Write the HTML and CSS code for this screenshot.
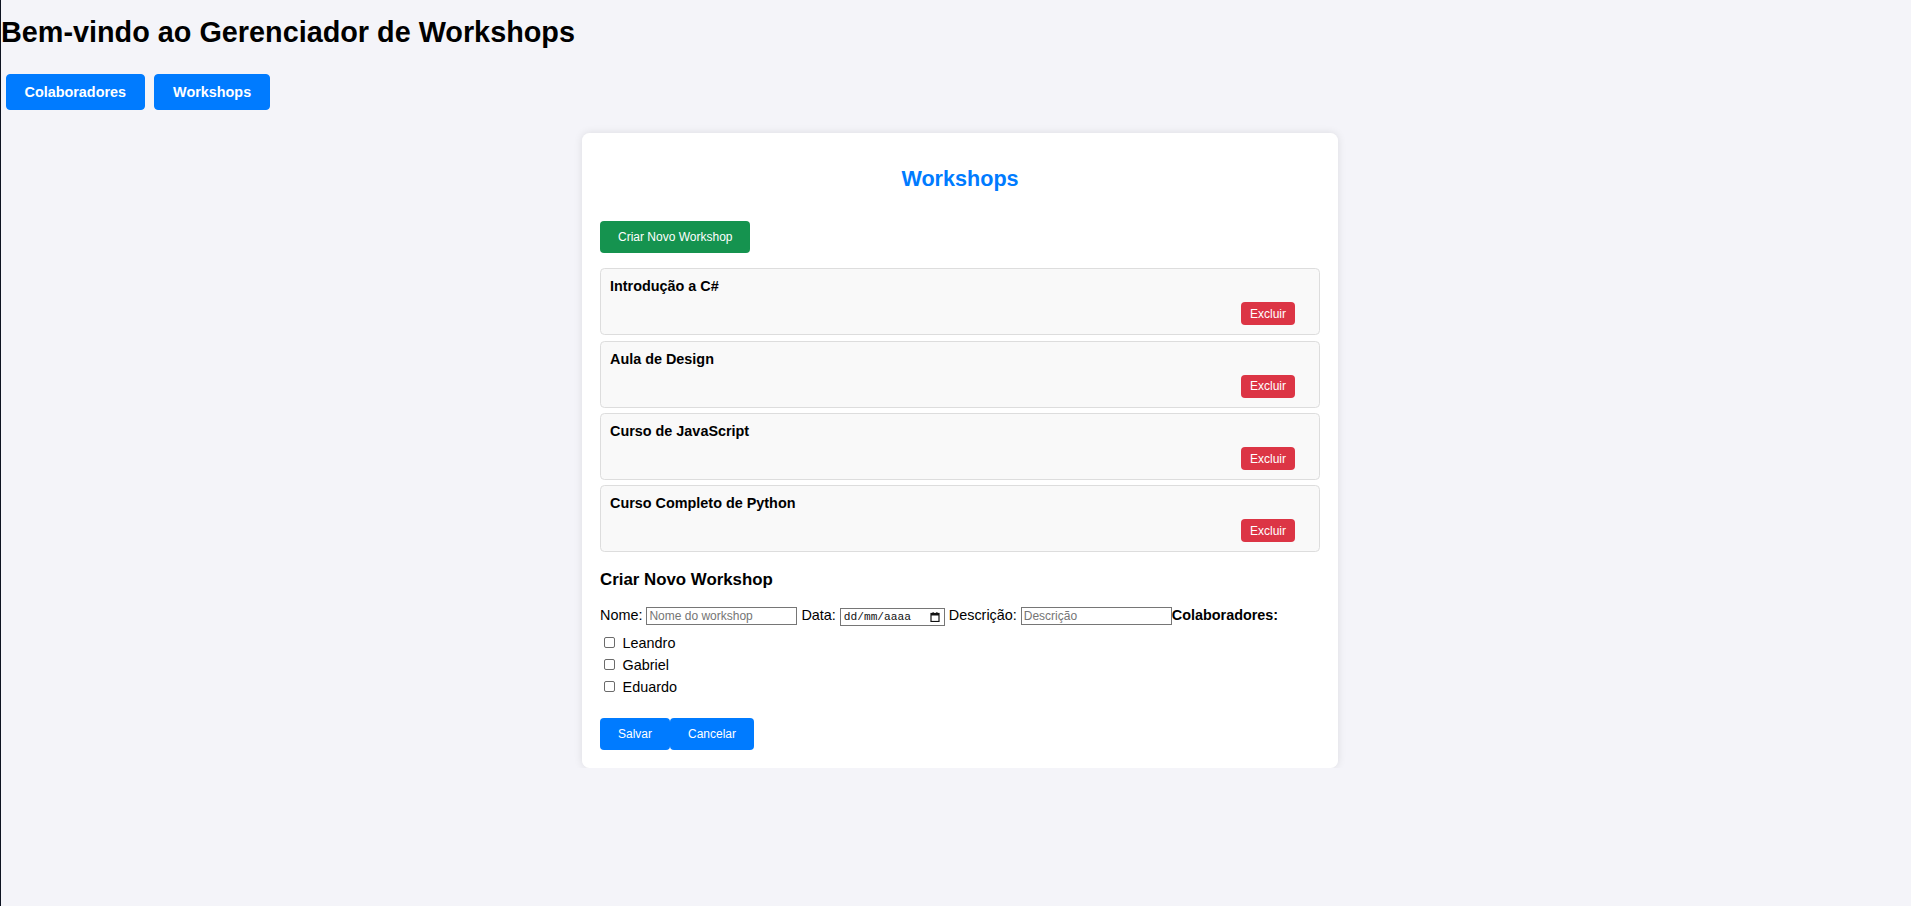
FILE: index.html
```html
<!DOCTYPE html>
<html lang="pt-BR">
<head>
<meta charset="utf-8">
<title>Gerenciador de Workshops</title>
<link rel="stylesheet" href="styles.css">
</head>
<body>
<h1 class="page-title">Bem-vindo ao Gerenciador de Workshops</h1>
<nav class="nav">
  <button class="nav-btn" type="button">Colaboradores</button>
  <button class="nav-btn" type="button">Workshops</button>
</nav>
<main class="main">
  <section class="card">
    <h2 class="card-title">Workshops</h2>
    <div class="create-wrap">
      <button class="btn btn-green" type="button">Criar Novo Workshop</button>
    </div>
    <ul class="list">
      <li class="item">
        <h3 class="item-title">Introdução a C#</h3>
        <div class="item-actions"><button class="btn-red" type="button">Excluir</button></div>
      </li>
      <li class="item">
        <h3 class="item-title">Aula de Design</h3>
        <div class="item-actions"><button class="btn-red" type="button">Excluir</button></div>
      </li>
      <li class="item">
        <h3 class="item-title">Curso de JavaScript</h3>
        <div class="item-actions"><button class="btn-red" type="button">Excluir</button></div>
      </li>
      <li class="item">
        <h3 class="item-title">Curso Completo de Python</h3>
        <div class="item-actions"><button class="btn-red" type="button">Excluir</button></div>
      </li>
    </ul>
    <h3 class="form-title">Criar Novo Workshop</h3>
    <form class="form">
      <div class="form-row"><label>Nome:</label> <input class="text-input" type="text" placeholder="Nome do workshop"> <label>Data:</label> <span class="date-input"><span class="date-text">dd/mm/aaaa</span><svg class="cal" width="10" height="10" viewBox="0 0 10 10"><rect x="1" y="1.5" width="8" height="8" fill="none" stroke="#111" stroke-width="1.2"/><rect x="1" y="1.5" width="8" height="2" fill="#111"/><rect x="2.6" y="0" width="1" height="2" fill="#111"/><rect x="6.4" y="0" width="1" height="2" fill="#111"/></svg></span> <label>Descrição:</label> <input class="text-input" type="text" placeholder="Descrição"><label class="bold-label">Colaboradores:</label></div>
      <div class="checks">
        <label class="check"><input type="checkbox" class="box"><span>Leandro</span></label>
        <label class="check"><input type="checkbox" class="box"><span>Gabriel</span></label>
        <label class="check"><input type="checkbox" class="box"><span>Eduardo</span></label>
      </div>
      <div class="form-actions">
        <button class="btn btn-blue" type="button">Salvar</button><button class="btn btn-blue" type="button">Cancelar</button>
      </div>
    </form>
  </section>
</main>
</body>
</html>
```

FILE: styles.css
```css
html {
  border-left: 1px solid #0d1321;
  background: #f4f4f9;
  min-height: 100%;
}

body {
  margin: 0;
  background: #f4f4f9;
  font-family: "Liberation Sans", Arial, sans-serif;
  font-size: 14.4px;
  color: #000;
}

.page-title {
  font-size: 28.8px;
  font-weight: bold;
  margin: 16px 0 20.4px 0;
  line-height: normal;
}

.nav {
  display: flex;
}

.nav-btn {
  margin: 4.5px;
  padding: 9px 18px;
  background: #007bff;
  border: 1px solid #007bff;
  border-radius: 4px;
  color: #fff;
  font-family: "Liberation Sans", Arial, sans-serif;
  font-size: 14.4px;
  font-weight: bold;
  line-height: 16px;
  cursor: pointer;
}

.main {
  padding-left: 8px;
}

.card {
  box-sizing: border-box;
  width: 756px;
  margin: 18.5px auto 0;
  padding: 18px;
  background: #fff;
  border-radius: 7.5px;
  box-shadow: 0 0 9px rgba(0, 0, 0, 0.1);
}

.card-title {
  margin: 16.4px 0 0;
  text-align: center;
  color: #007bff;
  font-size: 21.6px;
  font-weight: bold;
  line-height: 24.8px;
}

.create-wrap {
  display: flex;
  margin-top: 28.8px;
}

.btn {
  padding: 9px 18px;
  border: none;
  border-radius: 4px;
  color: #fff;
  font-family: "Liberation Sans", Arial, sans-serif;
  font-size: 12px;
  line-height: 14px;
  cursor: pointer;
}

.btn-green {
  background: #15934f;
}

.btn-blue {
  background: #007bff;
}

.list {
  list-style: none;
  margin: 15.3px 0 0;
  padding: 0;
  display: flex;
  flex-direction: column;
  gap: 5.3px;
}

.item {
  background: #f9f9f9;
  border: 1px solid #ddd;
  border-radius: 4.5px;
  padding: 9px;
}

.item-title {
  margin: 0;
  font-size: 14.4px;
  font-weight: bold;
  line-height: 16.1px;
}

.item-actions {
  display: flex;
  justify-content: flex-end;
  padding-right: 15px;
  margin-top: 8px;
}

.btn-red {
  background: #dc3545;
  border: none;
  border-radius: 4px;
  color: #fff;
  padding: 4.5px 9px;
  font-family: "Liberation Sans", Arial, sans-serif;
  font-size: 12px;
  line-height: 14px;
  cursor: pointer;
}

.form-title {
  margin: 17.5px 0 17.5px;
  font-size: 16.85px;
  font-weight: bold;
  line-height: 19.4px;
}

.form {
  margin: 0;
}

.form-row {
  line-height: normal;
}

.text-input {
  box-sizing: border-box;
  width: 151px;
  height: 18px;
  padding: 1px 2px;
  margin: 0;
  border: 1px solid #767676;
  border-radius: 0;
  font-family: "Liberation Sans", Arial, sans-serif;
  font-size: 12px;
  color: #000;
  background: #fff;
  vertical-align: baseline;
}

.text-input::placeholder {
  color: #757575;
}

.date-input {
  box-sizing: border-box;
  display: inline-flex;
  align-items: center;
  justify-content: space-between;
  width: 105px;
  height: 18px;
  padding: 0 4px 0 3px;
  border: 1px solid #767676;
  background: #fff;
  vertical-align: baseline;
}

.date-text {
  font-family: "Liberation Mono", "DejaVu Sans Mono", monospace;
  font-size: 11.2px;
  color: #111;
}

.cal {
  display: block;
}

.bold-label {
  font-weight: bold;
}

.checks {
  display: flex;
  flex-direction: column;
  gap: 4.4px;
  padding-top: 8.3px;
}

.check {
  display: flex;
  align-items: center;
  height: 17.6px;
  gap: 7.6px;
}

.box {
  appearance: none;
  -webkit-appearance: none;
  box-sizing: border-box;
  width: 11px;
  height: 11px;
  margin: 0 0 0 4px;
  border: 1px solid #6b6b6b;
  border-radius: 2px;
  background: #fff;
}

.form-actions {
  display: flex;
  margin-top: 22px;
}
```
